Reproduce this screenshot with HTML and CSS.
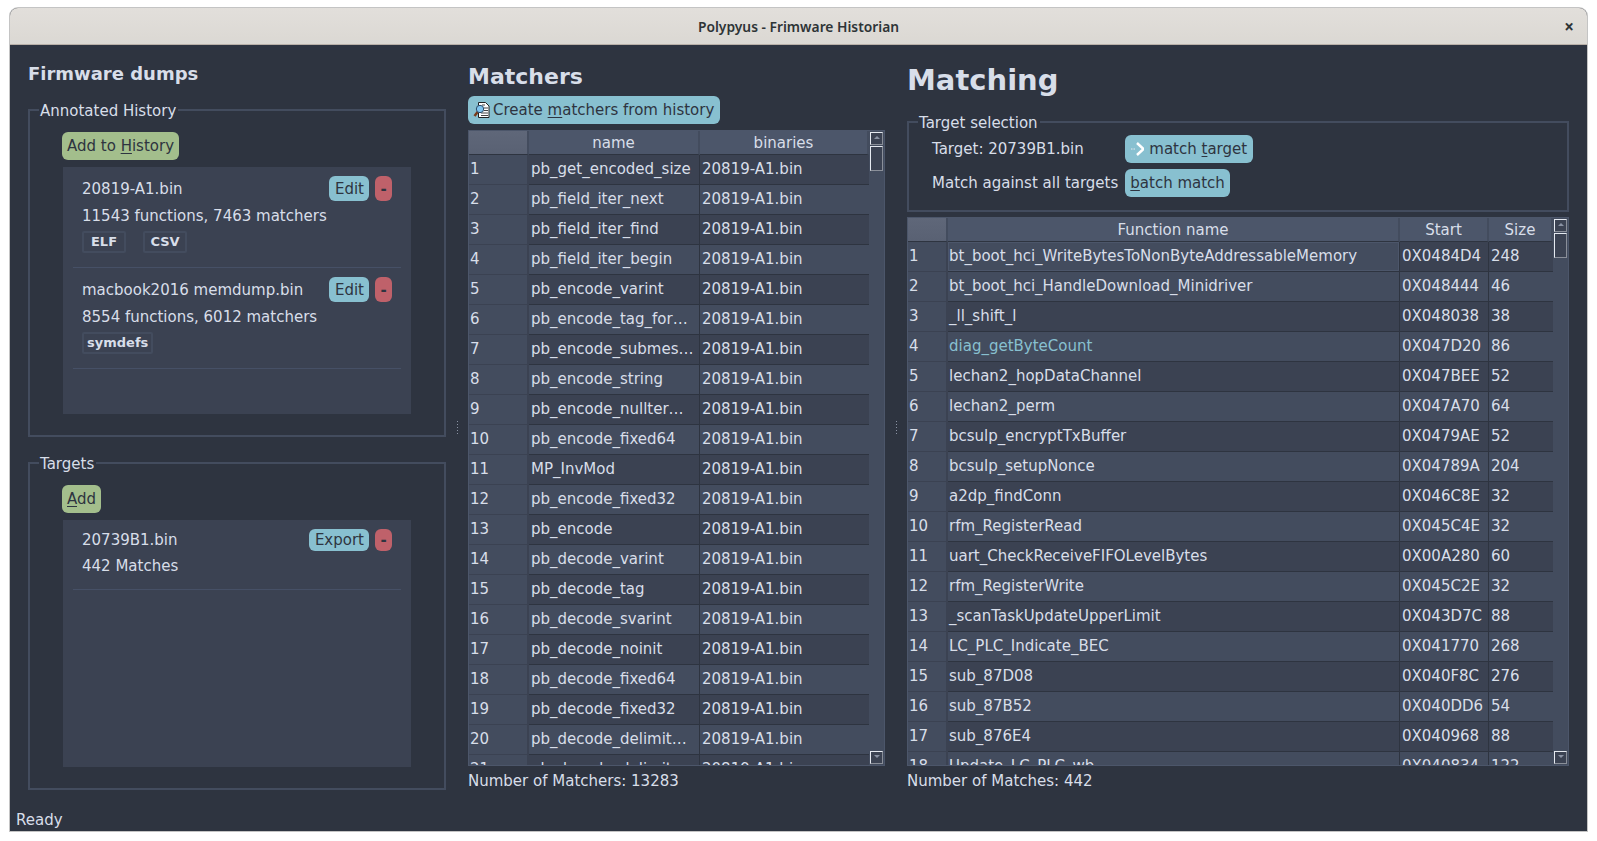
FILE: index.html
```html
<!DOCTYPE html>
<html lang="en">
<head>
  <meta charset="UTF-8" />
  <title>Polypyus - Frimware Historian</title>
  <link rel="stylesheet" href="styles.css">
</head>
<body>

<div class="window">
  <div class="titlebar">
    <span class="title">Polypyus - Frimware Historian</span>
    <span class="close">×</span>
  </div>

  <div class="content">
    <!-- Firmware dumps -->
    <div class="col col-left">
      <h2 class="head-small">Firmware dumps</h2>

      <fieldset class="group group-left">
        <legend>Annotated History</legend>
        <button class="btn green"><span>Add to <u>H</u>istory</span></button>
        <div class="list">
          <div class="item">
            <div class="item-top">
              <span class="item-name">20819-A1.bin</span>
              <button class="btn blue small">Edit</button>
              <button class="btn red small">-</button>
            </div>
            <div class="item-line">11543 functions, 7463 matchers</div>
            <div class="tags"><span class="tag">ELF</span><span class="tag">CSV</span></div>
          </div>
          <div class="item">
            <div class="item-top">
              <span class="item-name">macbook2016 memdump.bin</span>
              <button class="btn blue small">Edit</button>
              <button class="btn red small">-</button>
            </div>
            <div class="item-line">8554 functions, 6012 matchers</div>
            <div class="tags"><span class="tag">symdefs</span></div>
          </div>
        </div>
      </fieldset>

      <fieldset class="group group-left group-targets">
        <legend>Targets</legend>
        <button class="btn green"><u>A</u>dd</button>
        <div class="list">
          <div class="item item-target">
            <div class="item-top">
              <span class="item-name">20739B1.bin</span>
              <button class="btn blue small">Export</button>
              <button class="btn red small">-</button>
            </div>
            <div class="item-line">442 Matches</div>
          </div>
        </div>
      </fieldset>
    </div>

    <div class="splitter"><i></i></div>

    <!-- Matchers -->
    <div class="col col-mid">
      <h2 class="head-mid">Matchers</h2>
      <button class="btn blue btn-icon btn-create">
        <svg width="18" height="18" viewBox="0 0 18 18">
          <path d="M5.500 1.500h7l3.500 3.500v11.500H5.500z" fill="#fff" stroke="#222" stroke-width="1"/>
          <path d="M9 4h3M11 7h4M11 9.500h4M8 12h7M8 14.500h7" stroke="#444" stroke-width="1"/>
          <path d="M5 10.500L1.500 15" stroke="#7a3b1c" stroke-width="2.500"/>
          <circle cx="7" cy="8" r="3.700" fill="#7fc4ef" stroke="#2b4a68" stroke-width="1"/>
        </svg>
        <span>Create <u>m</u>atchers from history</span>
      </button>
      <div class="table table-mid">
        <div class="table-clip">
          <table>
            <colgroup><col class="c-num-mid"><col class="c-name-mid"><col></colgroup>
            <thead><tr><th class="corner"></th><th>name</th><th>binaries</th></tr></thead>
            <tbody>
              <tr><th>1</th><td>pb_get_encoded_size</td><td>20819-A1.bin</td></tr>
              <tr><th>2</th><td>pb_field_iter_next</td><td>20819-A1.bin</td></tr>
              <tr><th>3</th><td>pb_field_iter_find</td><td>20819-A1.bin</td></tr>
              <tr><th>4</th><td>pb_field_iter_begin</td><td>20819-A1.bin</td></tr>
              <tr><th>5</th><td>pb_encode_varint</td><td>20819-A1.bin</td></tr>
              <tr><th>6</th><td>pb_encode_tag_for…</td><td>20819-A1.bin</td></tr>
              <tr><th>7</th><td>pb_encode_submes…</td><td>20819-A1.bin</td></tr>
              <tr><th>8</th><td>pb_encode_string</td><td>20819-A1.bin</td></tr>
              <tr><th>9</th><td>pb_encode_nullter…</td><td>20819-A1.bin</td></tr>
              <tr><th>10</th><td>pb_encode_fixed64</td><td>20819-A1.bin</td></tr>
              <tr><th>11</th><td>MP_InvMod</td><td>20819-A1.bin</td></tr>
              <tr><th>12</th><td>pb_encode_fixed32</td><td>20819-A1.bin</td></tr>
              <tr><th>13</th><td>pb_encode</td><td>20819-A1.bin</td></tr>
              <tr><th>14</th><td>pb_decode_varint</td><td>20819-A1.bin</td></tr>
              <tr><th>15</th><td>pb_decode_tag</td><td>20819-A1.bin</td></tr>
              <tr><th>16</th><td>pb_decode_svarint</td><td>20819-A1.bin</td></tr>
              <tr><th>17</th><td>pb_decode_noinit</td><td>20819-A1.bin</td></tr>
              <tr><th>18</th><td>pb_decode_fixed64</td><td>20819-A1.bin</td></tr>
              <tr><th>19</th><td>pb_decode_fixed32</td><td>20819-A1.bin</td></tr>
              <tr><th>20</th><td>pb_decode_delimit…</td><td>20819-A1.bin</td></tr>
              <tr><th>21</th><td>pb_decode_delimit…</td><td>20819-A1.bin</td></tr>
            </tbody>
          </table>
        </div>
        <div class="scrollbar">
          <span class="sb-btn up"></span>
          <span class="sb-thumb"></span>
          <span class="sb-track"></span>
          <span class="sb-btn down"></span>
        </div>
      </div>
      <div class="count">Number of Matchers: 13283</div>
    </div>

    <div class="splitter"><i></i></div>

    <!-- Matching -->
    <div class="col col-right">
      <h1 class="head-big">Matching</h1>
      <fieldset class="group group-select">
        <legend>Target selection</legend>
        <div class="select-grid">
          <span>Target: 20739B1.bin</span>
          <div><button class="btn blue btn-icon btn-target">
            <svg width="14" height="18" viewBox="0 0 14 18">
              <path d="M1 9h1.500M3.500 9h1.500" stroke="#e5e9f0" stroke-width="1"/>
              <path d="M7 3l6.500 6-6.500 6" fill="none" stroke="#fff" stroke-width="2.500"/>
            </svg>
            <span>match <u>t</u>arget</span>
          </button></div>
          <span>Match against all targets</span>
          <div><button class="btn blue"><u>b</u>atch match</button></div>
        </div>
      </fieldset>
      <div class="table table-right">
        <div class="table-clip">
          <table>
            <colgroup><col class="c-num-right"><col><col class="c-start"><col class="c-size"></colgroup>
            <thead><tr><th class="corner"></th><th>Function name</th><th>Start</th><th>Size</th></tr></thead>
            <tbody>
              <tr><th>1</th><td class="focus">bt_boot_hci_WriteBytesToNonByteAddressableMemory</td><td>0X0484D4</td><td>248</td></tr>
              <tr><th>2</th><td>bt_boot_hci_HandleDownload_Minidriver</td><td>0X048444</td><td>46</td></tr>
              <tr><th>3</th><td>_ll_shift_l</td><td>0X048038</td><td>38</td></tr>
              <tr><th>4</th><td class="hit">diag_getByteCount</td><td>0X047D20</td><td>86</td></tr>
              <tr><th>5</th><td>lechan2_hopDataChannel</td><td>0X047BEE</td><td>52</td></tr>
              <tr><th>6</th><td>lechan2_perm</td><td>0X047A70</td><td>64</td></tr>
              <tr><th>7</th><td>bcsulp_encryptTxBuffer</td><td>0X0479AE</td><td>52</td></tr>
              <tr><th>8</th><td>bcsulp_setupNonce</td><td>0X04789A</td><td>204</td></tr>
              <tr><th>9</th><td>a2dp_findConn</td><td>0X046C8E</td><td>32</td></tr>
              <tr><th>10</th><td>rfm_RegisterRead</td><td>0X045C4E</td><td>32</td></tr>
              <tr><th>11</th><td>uart_CheckReceiveFIFOLevelBytes</td><td>0X00A280</td><td>60</td></tr>
              <tr><th>12</th><td>rfm_RegisterWrite</td><td>0X045C2E</td><td>32</td></tr>
              <tr><th>13</th><td>_scanTaskUpdateUpperLimit</td><td>0X043D7C</td><td>88</td></tr>
              <tr><th>14</th><td>LC_PLC_Indicate_BEC</td><td>0X041770</td><td>268</td></tr>
              <tr><th>15</th><td>sub_87D08</td><td>0X040F8C</td><td>276</td></tr>
              <tr><th>16</th><td>sub_87B52</td><td>0X040DD6</td><td>54</td></tr>
              <tr><th>17</th><td>sub_876E4</td><td>0X040968</td><td>88</td></tr>
              <tr><th>18</th><td>Update_LC_PLC_wb</td><td>0X040834</td><td>122</td></tr>
            </tbody>
          </table>
        </div>
        <div class="scrollbar">
          <span class="sb-btn up"></span>
          <span class="sb-thumb"></span>
          <span class="sb-track"></span>
          <span class="sb-btn down"></span>
        </div>
      </div>
      <div class="count">Number of Matches: 442</div>
    </div>
  </div>

  <div class="statusbar">Ready</div>
</div>

</body>
</html>
```

FILE: styles.css
```css
* { box-sizing: border-box; }
html, body { height: 100%; }
body {
  margin: 0;
  background-color: #fff;
  font-family: 'DejaVu Sans', sans-serif;
  font-size: 15px;
  color: #d8dee9;
  overflow: hidden;
  padding: 8px 10px 10px;
}

.window {
  width: 1577px;
  height: 823px;
  display: flex;
  flex-direction: column;
  background-color: #2e3440;
  border-radius: 8px 8px 0 0;
  overflow: hidden;
  box-shadow: 0 0 0 1px #c4c4c4;
}

/* title bar */
.titlebar {
  height: 37px;
  flex: none;
  display: flex;
  align-items: center;
  justify-content: center;
  position: relative;
  background: linear-gradient(#e2dfdb, #dbd8d3);
  border-bottom: 1px solid #b9b0a8;
  color: #2e3436;
}
.title {
  font-family: 'Noto Sans', sans-serif;
  font-weight: 600;
  font-size: 13.800px;
}
.close {
  position: absolute;
  right: 13px;
  top: 7px;
  font-family: 'Noto Sans', sans-serif;
  font-weight: 700;
  font-size: 17px;
}

/* main columns */
.content {
  flex: 1;
  display: flex;
  padding: 0 18px 0 18px;
  min-height: 0;
}
.col { display: flex; flex-direction: column; }
.col-left { width: 418px; }
.col-mid { width: 417px; }
.col-right { width: 662px; }

.splitter {
  width: 22px;
  display: flex;
  justify-content: center;
  padding-top: 375px;
}
.splitter i {
  width: 3px;
  height: 16px;
  background-image: radial-gradient(#8a92a3 1px, transparent 1px);
  background-size: 3px 3px;
}

h1, h2 { margin: 0; font-weight: 700; color: #d8dee9; }
.head-small { font-size: 18px; line-height: 24px; margin-top: 17px; }
.head-mid { font-size: 22px; line-height: 28px; margin-top: 18px; }
.head-big { font-size: 29px; line-height: 36px; margin-top: 17px; }

/* group boxes */
.group {
  margin: 0;
  min-width: 0;
  border: 2px solid #434c5e;
}
.group legend {
  padding: 2px 2px 0 1px;
  line-height: 18px;
}
.group-left {
  height: 337px;
  margin-top: 14px;
  padding: 12px 32px 21px 32px;
}
.group-left legend { margin-left: -23px; }
.group-targets { margin-top: 16px; }

.list {
  height: 247px;
  margin: 7px 1px 0;
  padding: 0 10px;
  background-color: #3b4252;
}
.item {
  height: 101px;
  padding: 9px 9px 0;
  border-bottom: 1px solid #465066;
}
.item-target { height: 70px; }
.item-top { display: flex; align-items: center; gap: 6px; height: 25px; }
.item-name { flex: 1; }
.item-line { margin-top: 5px; line-height: 20px; }
.item-target .item-top { height: 22px; }

.tags { display: flex; gap: 17px; margin-top: 5px; }
.tag {
  border: 2px solid #434c5e;
  border-radius: 2px;
  height: 22px;
  min-width: 44px;
  padding: 0 3px;
  font-size: 13px;
  font-weight: 700;
  line-height: 18px;
  text-align: center;
}

/* buttons */
.btn {
  font-family: inherit;
  font-size: 15px;
  color: #2e3440;
  border: none;
  border-radius: 6px;
  height: 28px;
  padding: 0 5px;
  white-space: nowrap;
}
.btn u { text-underline-offset: 2px; }
.green { background-color: #a3be8c; }
.blue { background-color: #88c0d0; }
.red { background-color: #bf616a; }
.small { height: 25px; padding: 0 5px 0 6px; flex: none; }
.red.small { width: 17px; padding: 0; font-weight: 700; }
.item-target .small { height: 22px; }
.btn-icon {
  display: inline-flex;
  align-items: center;
  align-self: flex-start;
  padding-right: 6px;
}
.btn-create { margin-top: 5px; gap: 2px; }
.btn-target { gap: 5px; }

.group-select {
  height: 100px;
  margin-top: 14px;
  padding: 3px 0 0 23px;
}
.group-select legend { margin-left: -14px; }
.select-grid {
  display: grid;
  grid-template-columns: auto 1fr;
  grid-template-rows: 28px 28px;
  gap: 6px 7px;
  align-items: center;
}

/* tables */
.table {
  display: flex;
  height: 636px;
  margin-top: 6px;
  border: 1px solid #4c566a;
  background-color: #434c5e;
}
.table-right { height: 549px; margin-top: 5px; }
.table-clip { flex: 1; overflow: hidden; }
table {
  width: 100%;
  border-collapse: separate;
  border-spacing: 0;
  table-layout: fixed;
}
.c-num-mid { width: 60px; }
.c-name-mid { width: 171px; }
.c-num-right { width: 40px; }
.c-start { width: 89px; }
.c-size { width: 64px; }

thead th {
  height: 24px;
  font-weight: 400;
  background-color: #4c566a;
  border-right: 2px solid #434c5e;
  border-bottom: 1px solid #2e3440;
  text-align: center;
  padding: 0;
}
thead th.corner { background: linear-gradient(#5f6779, #596173); }
tbody th {
  height: 30px;
  font-weight: 400;
  text-align: left;
  padding: 0 0 2px 1px;
  background-color: #434c5e;
  border-right: 2px solid #3b4252;
  border-bottom: 1px solid #3b4252;
}
td {
  height: 30px;
  padding: 0 2px 2px 2px;
  white-space: nowrap;
  overflow: hidden;
  border-right: 1px solid #2e3440;
  border-bottom: 1px solid #2e3440;
  background-color: #3b4252;
}
.table-right td:first-of-type { padding-left: 1px; }
tbody tr:nth-child(even) td { background-color: #434c5e; }
td:last-child { border-right: none; }
td.hit { color: #88c0d0; }
td.focus { box-shadow: inset 0 0 0 1px #4c566a; background-color: #434c5e; }

.scrollbar {
  width: 15px;
  flex: none;
  display: flex;
  flex-direction: column;
  background-color: #434c5e;
  padding: 1px;
}
.sb-btn {
  height: 13px;
  flex: none;
  position: relative;
  background-color: #3b4252;
  border: 1px solid #e5e9f0;
  border-right-color: #8a8f99;
  border-bottom-color: #8a8f99;
}
.sb-btn::after {
  content: "";
  position: absolute;
  left: 3px;
  top: 3px;
  border: 3px solid transparent;
  border-top: 0;
  border-bottom: 3px solid #8a92a3;
}
.sb-btn.down::after { transform: rotate(180deg); }
.sb-thumb {
  height: 25px;
  flex: none;
  margin-top: 1px;
  background-color: #3b4252;
  border: 1px solid #e5e9f0;
  border-right-color: #8a8f99;
  border-bottom-color: #8a8f99;
}
.sb-track { flex: 1; }

.count { margin-top: 7px; line-height: 17px; }
.statusbar {
  height: 24px;
  flex: none;
  padding: 4px 6px 0;
  line-height: 18px;
}
```
